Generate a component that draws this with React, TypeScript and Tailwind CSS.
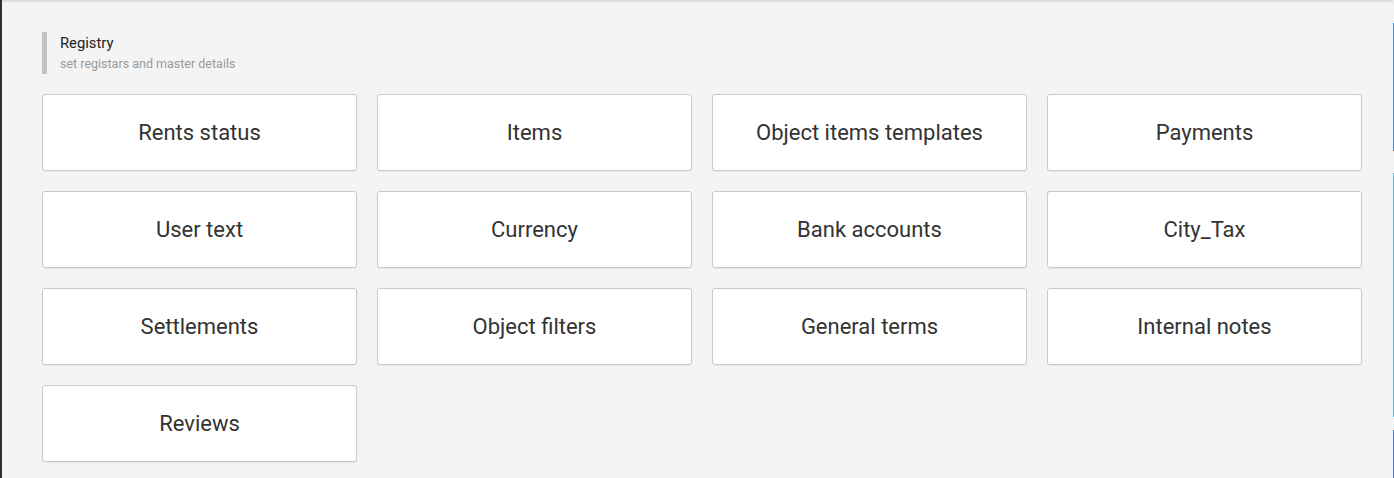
import React from "react";

const items = [
  "Rents status",
  "Items",
  "Object items templates",
  "Payments",
  "User text",
  "Currency",
  "Bank accounts",
  "City_Tax",
  "Settlements",
  "Object filters",
  "General terms",
  "Internal notes",
  "Reviews",
];

export default function App() {
  return (
    <div
      className="flex h-[478px] w-[1394px] overflow-hidden bg-[#f4f4f4]"
      style={{ fontFamily: "Roboto, 'Liberation Sans', sans-serif" }}
    >
      <div className="w-[2px] shrink-0 bg-[#27313b]" />
      <div className="flex-1 border-t-2 border-[#dedede]">
        <div className="pl-[40px] pr-[31px] pt-[30px]">
          <div className="flex h-[42px] border-l-[5px] border-[#c2c2c2] pl-[13px]">
            <div className="flex flex-col pt-[2px]">
              <div className="text-[14.8px] font-normal leading-[19px] text-[#222]">Registry</div>
              <div className="mt-[3px] text-[12.5px] leading-[15px] text-[#9a9a9a]">
                set registars and master details
              </div>
            </div>
          </div>
          <div className="mt-[20px] grid grid-cols-4 gap-x-[20px] gap-y-[20px]">
            {items.map((t) => (
              <div
                key={t}
                className="flex h-[77px] items-center justify-center rounded-[3px] border border-[#c9c9c9] bg-white text-[22px] text-[#333] shadow-[0_1px_1px_rgba(0,0,0,0.05)]"
              >
                {t}
              </div>
            ))}
          </div>
        </div>
      </div>
      <div className="flex w-[1px] shrink-0 flex-col">
        <div className="h-[23px]" />
        <div className="h-[128px] bg-[#3a8fd9]" />
        <div className="h-[22px]" />
        <div className="h-[244px] bg-[#5ab7e3]" />
        <div className="h-[13px]" />
        <div className="flex-1 bg-[#2f78cf]" />
      </div>
    </div>
  );
}
